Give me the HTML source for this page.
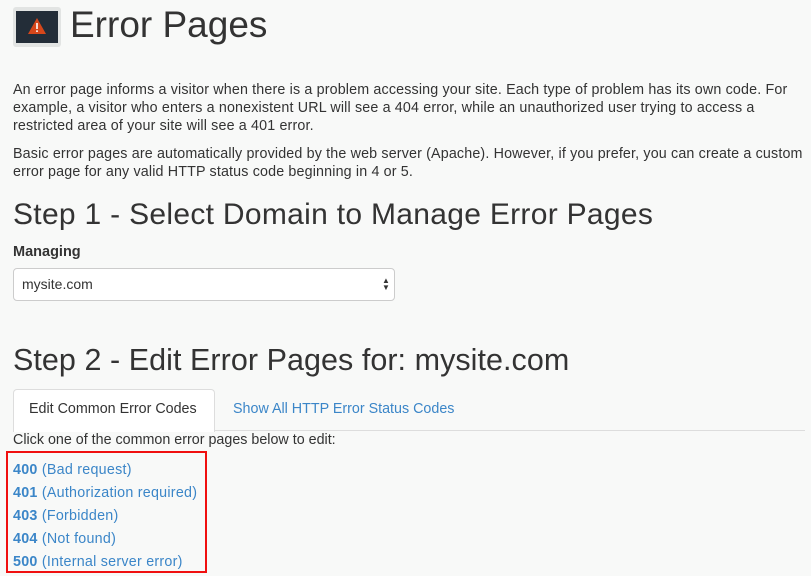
<!DOCTYPE html>
<html><head><meta charset="utf-8"><style>
body{margin:0;width:811px;height:576px;background:#f8f9f8;font-family:"Liberation Sans",sans-serif;color:#333;position:relative;overflow:hidden}
.a{position:absolute;white-space:nowrap}
p{margin:0}
a{color:#3b86c8;text-decoration:none}
</style></head><body>
<div class="a" style="left:13px;top:7px;width:48px;height:40px;background:#e2e4e3;border-radius:3px"></div>
<div class="a" style="left:16px;top:11px;width:42px;height:32px;background:#232d38"></div>
<svg class="a" style="left:27px;top:17px" width="20" height="18" viewBox="0 0 20 18"><path d="M10 1L19 17H1Z" fill="#d6471b"/><rect x="9.2" y="6" width="1.6" height="6" fill="#fff"/><rect x="9.2" y="13.3" width="1.6" height="1.7" fill="#fff"/></svg>
<div class="a" style="left:70px;top:4px;font-size:37px;color:#333">Error Pages</div>
<div class="a" style="left:13px;top:81px;font-size:14.3px;line-height:18px;letter-spacing:0.15px">An error page informs a visitor when there is a problem accessing your site. Each type of problem has its own code. For<br>example, a visitor who enters a nonexistent URL will see a 404 error, while an unauthorized user trying to access a<br>restricted area of your site will see a 401 error.</div>
<div class="a" style="left:13px;top:145px;font-size:14.3px;line-height:18px;letter-spacing:0.15px">Basic error pages are automatically provided by the web server (Apache). However, if you prefer, you can create a custom<br>error page for any valid HTTP status code beginning in 4 or 5.</div>
<div class="a" style="left:13px;top:198px;font-size:30px;letter-spacing:0.3px">Step 1 - Select Domain to Manage Error Pages</div>
<div class="a" style="left:13px;top:244px;font-size:14.5px;font-weight:bold">Managing</div>
<div class="a" style="left:13px;top:268px;width:380px;height:31px;border:1px solid #ccc;border-radius:4px;background:#fff"></div>
<div class="a" style="left:22px;top:276px;font-size:14px">mysite.com</div>
<div class="a" style="left:382px;top:277px;font-size:8px;line-height:7px;color:#333">▲<br>▼</div>
<div class="a" style="left:13px;top:343px;font-size:30.5px;letter-spacing:0.05px">Step 2 - Edit Error Pages for: mysite.com</div>
<div class="a" style="left:13px;top:430px;width:792px;height:1px;background:#ddd"></div>
<div class="a" style="left:13px;top:389px;width:200px;height:42px;border:1px solid #ddd;border-bottom:none;border-radius:4px 4px 0 0;background:#fff"></div>
<div class="a" style="left:29px;top:401px;font-size:14.3px">Edit Common Error Codes</div>
<div class="a" style="left:233px;top:401px;font-size:14.3px;color:#3b86c8">Show All HTTP Error Status Codes</div>
<div class="a" style="left:13px;top:432px;font-size:14.3px">Click one of the common error pages below to edit:</div>
<div class="a" style="left:6px;top:451px;width:197px;height:118px;border:2px solid #f01010"></div>
<div class="a" style="left:13px;top:459px;font-size:14.3px;line-height:23px;letter-spacing:0.25px">
<a><b>400</b> (Bad request)</a><br><a><b>401</b> (Authorization required)</a><br><a><b>403</b> (Forbidden)</a><br><a><b>404</b> (Not found)</a><br><a><b>500</b> (Internal server error)</a></div>
</body></html>
